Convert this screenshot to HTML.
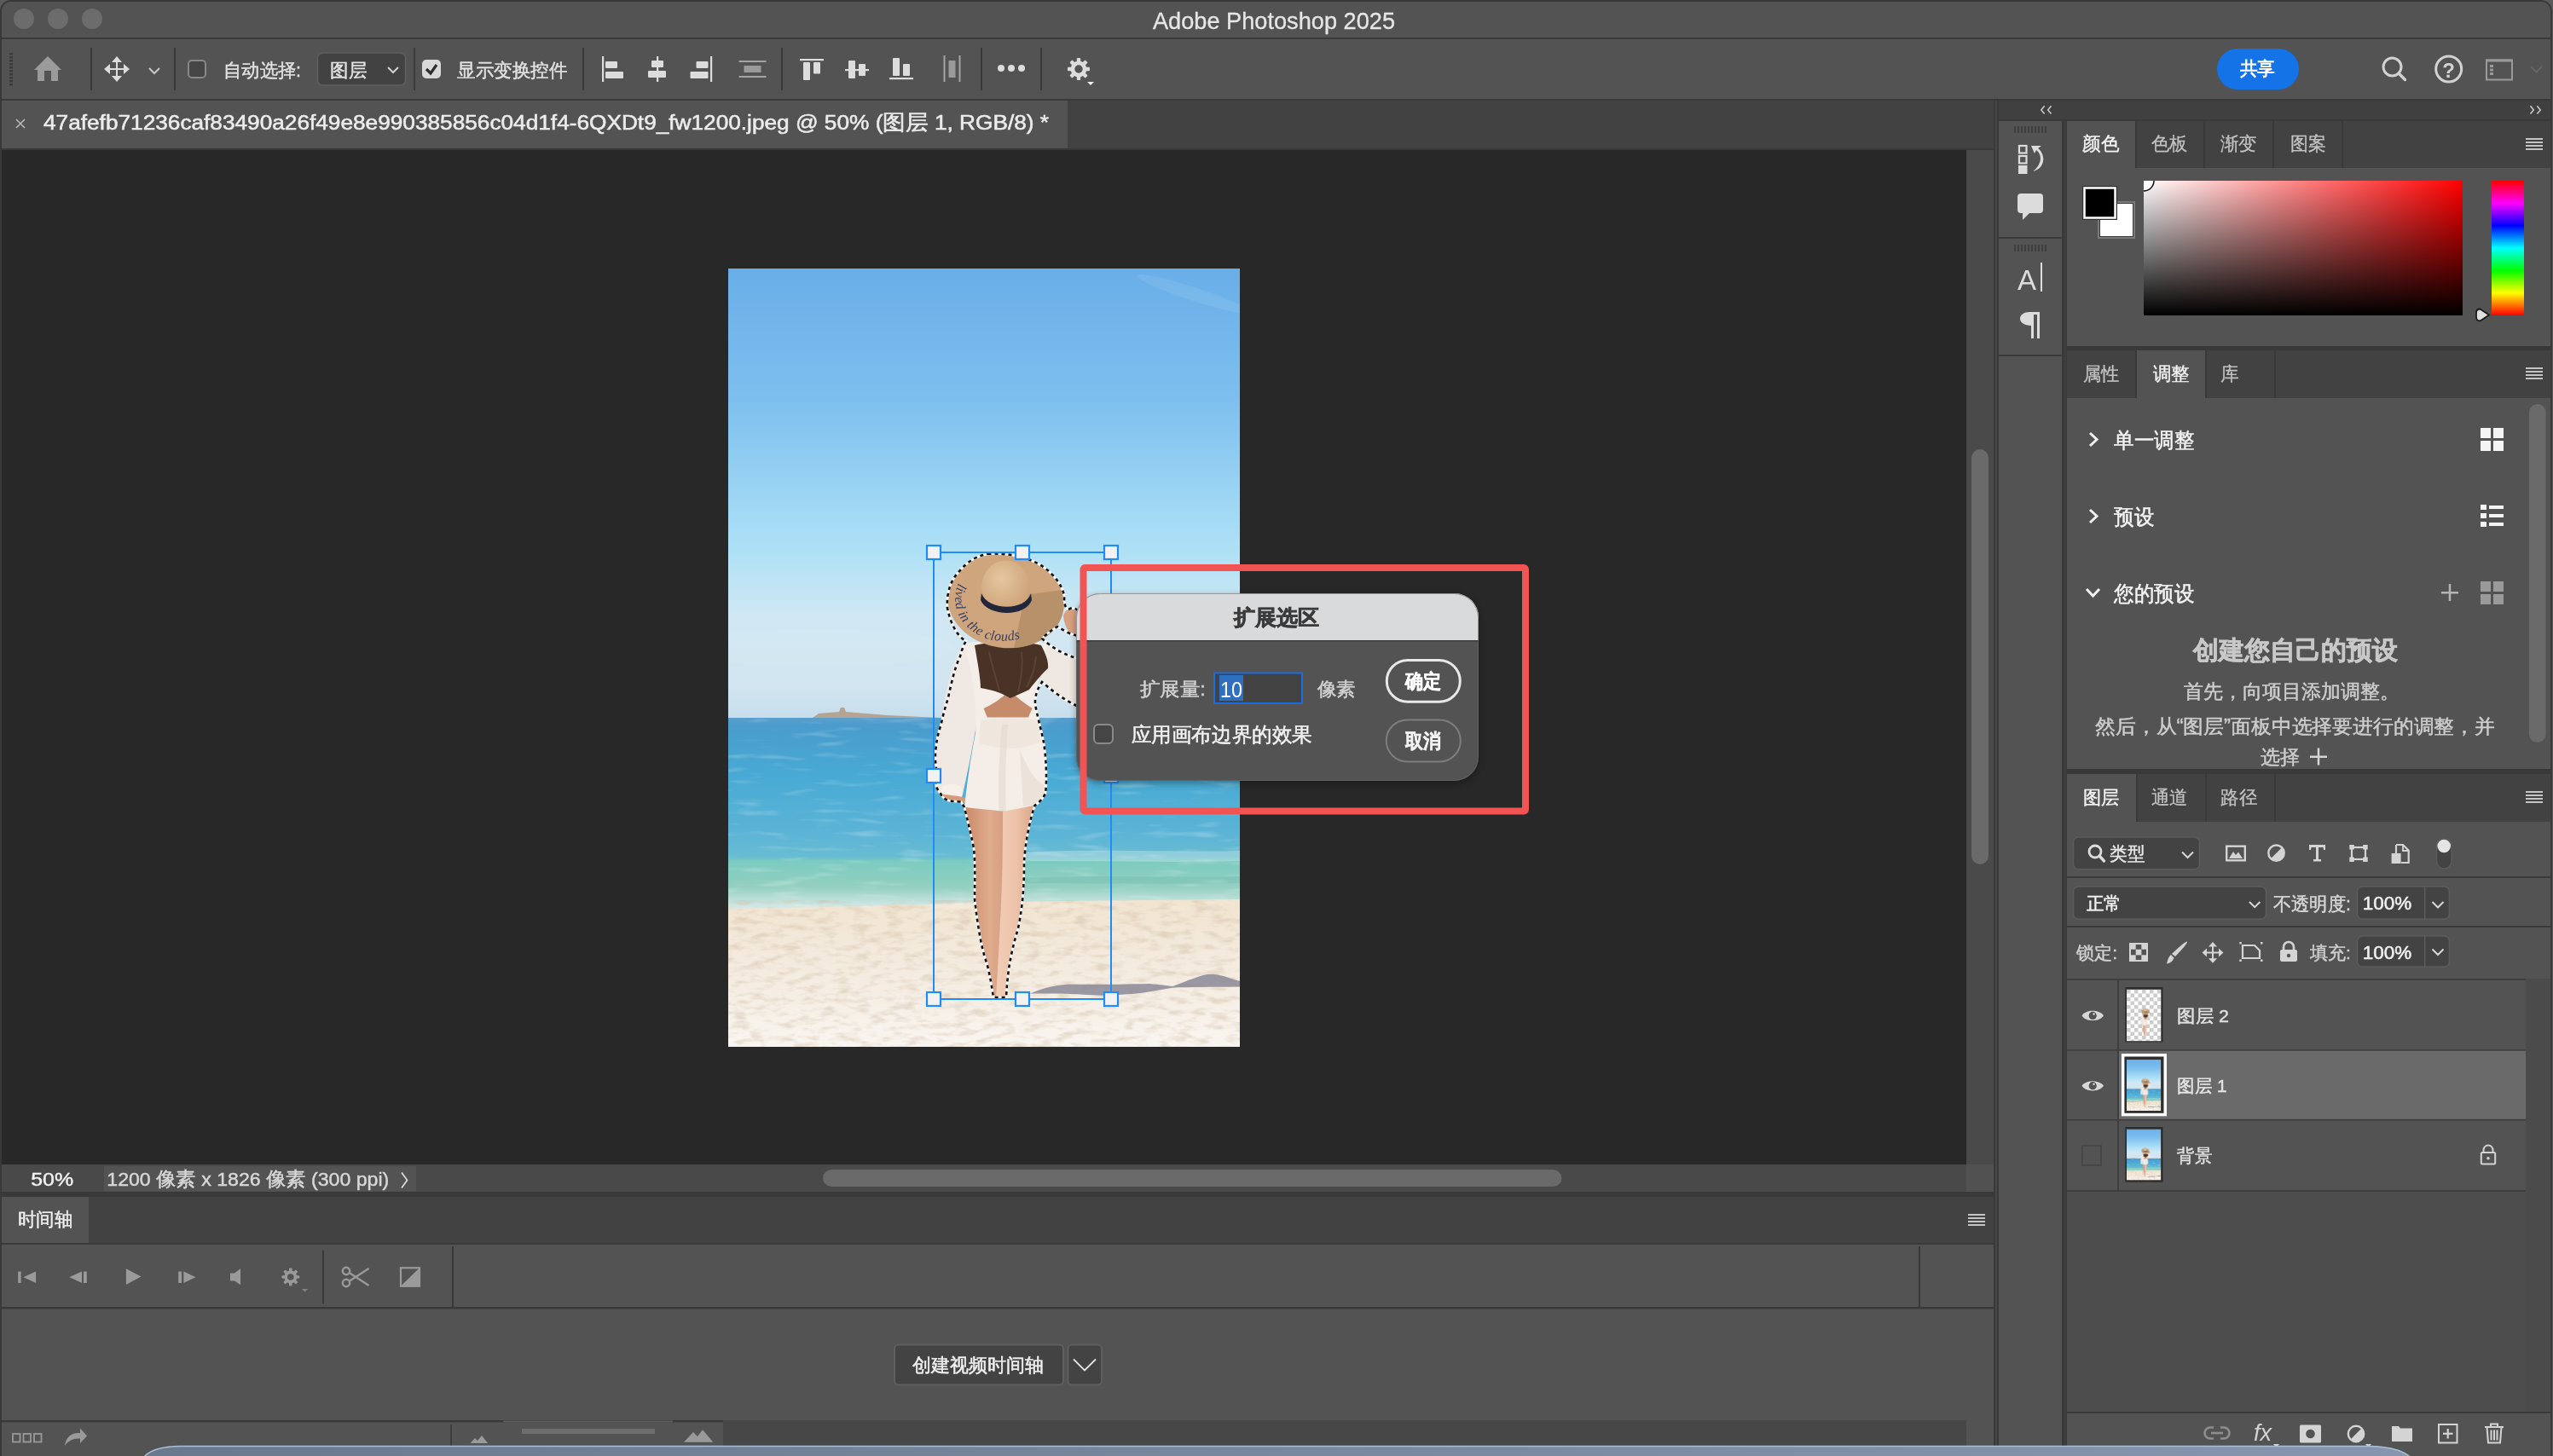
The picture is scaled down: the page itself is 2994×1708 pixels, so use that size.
<!DOCTYPE html>
<html><head><meta charset="utf-8">
<style>
*{box-sizing:border-box;margin:0;padding:0}
html,body{width:2994px;height:1708px;overflow:hidden;background:#5a5a5a;font-family:"Liberation Sans",sans-serif;color:#e8e8e8}
.a{position:absolute}
.t{position:absolute;white-space:nowrap;line-height:1}
.ic{position:absolute;background:#dcdcdc}
</style></head><body>
<!-- window frame -->
<div class="a" style="left:0;top:0;width:2993px;height:1708px;background:#393939;border-radius:13px 13px 0 0"></div>
<!-- title bar -->
<div class="a" style="left:2px;top:2px;width:2989px;height:42px;background:#535353;border-radius:11px 11px 0 0"></div>
<div class="a" style="left:16px;top:10px;width:24px;height:24px;border-radius:50%;background:#6c6c6c"></div>
<div class="a" style="left:56px;top:10px;width:24px;height:24px;border-radius:50%;background:#6c6c6c"></div>
<div class="a" style="left:96px;top:10px;width:24px;height:24px;border-radius:50%;background:#6c6c6c"></div>

<!-- options bar -->
<div class="a" style="left:2px;top:46px;width:2989px;height:70px;background:#535353"></div>

<!-- doc tab bar -->
<div class="a" style="left:2px;top:118px;width:2336px;height:56px;background:#424242"></div>
<div class="a" style="left:2px;top:118px;width:1250px;height:56px;background:#535353"></div>

<!-- canvas -->
<div class="a" style="left:2px;top:176px;width:2304px;height:1190px;background:#282828"></div>
<div class="a" style="left:2306px;top:176px;width:32px;height:1190px;background:#4a4a4a"></div>
<div class="a" style="left:2312px;top:527px;width:20px;height:487px;background:#6a6a6a;border-radius:10px"></div>

<svg class="a" style="left:854px;top:315px" width="600" height="913" viewBox="854 315 600 913">
<defs>
<linearGradient id="sky" x1="0" y1="0" x2="0" y2="1"><stop offset="0" stop-color="#69aee8"/><stop offset="0.29" stop-color="#7dbfee"/><stop offset="0.615" stop-color="#ace0f6"/><stop offset="0.77" stop-color="#d0e8f4"/><stop offset="0.92" stop-color="#d2e5f0"/><stop offset="1" stop-color="#c8deec"/></linearGradient>
<linearGradient id="sea" x1="0" y1="0" x2="0" y2="1"><stop offset="0" stop-color="#5a9fcc"/><stop offset="0.04" stop-color="#4a9ccc"/><stop offset="0.3" stop-color="#48aad4"/><stop offset="0.6" stop-color="#5cb4d6"/><stop offset="0.72" stop-color="#68bcd2"/><stop offset="0.745" stop-color="#7ccbc0"/><stop offset="0.88" stop-color="#94d0c0"/><stop offset="0.93" stop-color="#b4dcd4"/><stop offset="0.97" stop-color="#cce6e4"/><stop offset="1" stop-color="#dde9e0"/></linearGradient>
<linearGradient id="sand" x1="0" y1="0" x2="0" y2="1"><stop offset="0" stop-color="#f1e4d0"/><stop offset="0.3" stop-color="#f3e9db"/><stop offset="0.7" stop-color="#f6efe6"/><stop offset="1" stop-color="#f9f5f0"/></linearGradient>
<radialGradient id="crown" cx="0.4" cy="0.35" r="0.75"><stop offset="0" stop-color="#e6c6a0"/><stop offset="1" stop-color="#c99e72"/></radialGradient>
<linearGradient id="legL" x1="0" y1="0" x2="1" y2="0"><stop offset="0" stop-color="#c88a68"/><stop offset="0.6" stop-color="#e0ac8e"/><stop offset="1" stop-color="#d49c7e"/></linearGradient>
<linearGradient id="legR" x1="0" y1="0" x2="1" y2="0"><stop offset="0" stop-color="#f0cdb6"/><stop offset="0.5" stop-color="#eec4aa"/><stop offset="1" stop-color="#d9a486"/></linearGradient>
<path id="brimtxt" d="M1128 676 C1118 700 1130 728 1160 738 C1180 744 1205 742 1222 730"/>
</defs>
<g id="photoimg"><g id="bgimg">
<rect x="854" y="315" width="600" height="528" fill="url(#sky)"/>
<ellipse cx="1400" cy="345" rx="70" ry="8" fill="#ffffff" opacity="0.08" transform="rotate(18 1400 345)"/>
<ellipse cx="960" cy="760" rx="160" ry="22" fill="#ffffff" opacity="0.05"/>
<rect x="854" y="842" width="600" height="226" fill="url(#sea)"/>
<path d="M1200 1000 C1280 995 1380 1000 1454 998 L1454 1010 C1380 1012 1280 1010 1200 1010 Z" fill="#e0f0ee" opacity="0.35"/>
<path d="M1200 1030 C1290 1026 1380 1030 1454 1028 L1454 1036 C1380 1038 1290 1036 1200 1036 Z" fill="#5aa8a0" opacity="0.2"/>
<path d="M854 1066 C1000 1064 1100 1060 1200 1058 C1300 1056 1380 1056 1454 1055 L1454 1228 L854 1228 Z" fill="url(#sand)"/>
<filter id="sandn" x="854" y="1056" width="600" height="172" filterUnits="userSpaceOnUse"><feTurbulence type="fractalNoise" baseFrequency="0.05 0.13" numOctaves="3" seed="11" result="n"/><feColorMatrix in="n" type="matrix" values="0 0 0 0 0.62  0 0 0 0 0.5  0 0 0 0 0.36  -3 0 0 0 1.62"/></filter>
<rect x="854" y="1062" width="600" height="166" fill="#000" filter="url(#sandn)" opacity="0.42"/>
<filter id="sean" x="854" y="842" width="600" height="226" filterUnits="userSpaceOnUse"><feTurbulence type="fractalNoise" baseFrequency="0.02 0.12" numOctaves="2" seed="5" result="n"/><feColorMatrix in="n" type="matrix" values="0 0 0 0 1  0 0 0 0 1  0 0 0 0 1  2.2 0 0 0 -1.25"/></filter>
<rect x="854" y="846" width="600" height="205" fill="#000" filter="url(#sean)" opacity="0.35"/>
<path d="M953 842 L960 837 L984 835 L986 830 L990 830 L992 835 L1040 839 L1103 842 Z" fill="#b4a494"/>
<path d="M1208 1165.6 C1225 1158 1240 1155 1258.7 1154.5 C1280 1155 1300 1155 1348.6 1154 C1360 1155 1368 1156 1375 1157 C1395 1150 1410 1142 1422.7 1142.8 C1435 1144 1445 1149 1454 1150.8 L1454 1157.6 C1420 1158 1395 1158 1375 1158.7 C1355 1162 1340 1165 1327.5 1166 C1310 1167 1300 1167.5 1295.7 1167.7 C1270 1167 1255 1166 1242.9 1165.6 Z" fill="#8a8898" opacity="0.85"/>
</g>
<!-- figure -->
<defs><clipPath id="brimclip"><ellipse cx="1179.5" cy="705" rx="68.5" ry="55" transform="rotate(8 1179.5 705)"/></clipPath>
<path id="brimtxt2" d="M1124 684 C1112 712 1128 740 1160 750 C1185 755 1208 748 1224 736"/>
<filter id="soft" x="-5%" y="-5%" width="110%" height="110%"><feGaussianBlur stdDeviation="0.7"/></filter></defs>
<g id="figimg">
<g filter="url(#soft)">
<path d="M1216 752 C1232 758 1250 768 1274 772 L1274 832 C1255 826 1235 812 1222 800 C1216 790 1214 770 1216 752 Z" fill="#efe7e1"/>
<path d="M1247 722 C1250 713 1258 712 1264 718 L1266 748 C1256 747 1248 737 1247 722 Z" fill="#d8a080"/>
<path d="M1130 755 C1120 770 1110 800 1103 851 C1098 875 1096 895 1098 910 C1097 920 1100 928 1104 932 L1128 936 C1134 910 1140 880 1146 845 C1148 810 1142 775 1130 755 Z" fill="#f0e8e2"/>
<path d="M1104 926 C1106 918 1122 918 1128 924 L1128 936 C1118 936 1108 934 1104 932 Z" fill="#f6f0ea"/>
<path d="M1104 932 C1110 940 1120 942 1132 941 L1134 936 C1124 934 1112 932 1104 932 Z" fill="#d49a7a"/>
<path d="M1130 755 C1160 750 1205 750 1228 756 C1222 780 1214 805 1214.7 830 C1218 846 1222 860 1224 871 C1227 890 1228 915 1226 931 C1222 938 1218 942 1213.7 944.7 C1200 950 1185 954 1172.5 954 C1158 953 1143 950 1131 947 C1134 920 1138 890 1144 860 C1146 835 1142 790 1130 755 Z" fill="#f5ede7"/>
<path d="M1150 845 C1170 842 1195 842 1216 845 L1220 870 C1200 880 1175 880 1148 872 Z" fill="#ece2da" opacity="0.7"/>
<path d="M1175 850 C1172 880 1170 920 1172 954 L1180 953 C1178 920 1180 880 1182 850 Z" fill="#e4d8cf" opacity="0.6"/>
<path d="M1196 880 C1205 900 1212 915 1224 920 L1226 931 C1222 938 1218 942 1213.7 944.7 L1200 946 Z" fill="#e9ddd4" opacity="0.7"/>
<path d="M1153.6 831 C1165 826 1176 818 1184 810 C1192 818 1203 826 1210.7 831 C1208 836 1207 839 1206 841.6 L1158 841.6 C1156 838 1155 834 1153.6 831 Z" fill="#c68b6a"/>
<path d="M1143 757 C1165 752 1200 752 1221 757 C1226 766 1230 776 1229 784 C1222 790 1214 800 1207 809 C1200 812 1192 816 1185 819 C1176 814 1168 810 1150 807 C1150 795 1146 775 1143 757 Z" fill="#4a3127"/><path d="M1160 765 C1163 780 1168 795 1172 810 M1198 765 C1200 780 1198 795 1194 812 M1215 770 C1214 782 1210 795 1204 806" stroke="#6e5040" stroke-width="2" fill="none" opacity="0.55"/>
<path d="M1131 947 C1134 960 1138 975 1142 995 C1144 1015 1143 1035 1143 1055 C1146 1080 1150 1110 1157 1129 C1160 1140 1162 1150 1165 1170 L1176 1170 C1175 1140 1178 1100 1176 1060 C1175 1020 1178 980 1180 952 Z" fill="url(#legL)"/>
<path d="M1176 952 L1213.7 944.7 C1208 960 1202 990 1201 1012 C1201 1035 1200 1060 1194 1089 C1188 1110 1182 1130 1180 1170 L1168 1170 C1170 1140 1172 1100 1174 1060 C1176 1020 1176 980 1176 952 Z" fill="url(#legR)"/>
<ellipse cx="1179.5" cy="705" rx="68.5" ry="55" transform="rotate(8 1179.5 705)" fill="#cea57c"/>
<path d="M1202 698 L1262 690 L1262 775 L1186 775 Z" fill="#a8845f" opacity="0.6" clip-path="url(#brimclip)"/>
<ellipse cx="1179.6" cy="688" rx="28.3" ry="30.5" fill="url(#crown)"/>
<path d="M1151 696 C1158 716 1202 718 1209 696 L1210 704 C1202 725 1158 723 1150 704 Z" fill="#24273a"/>
</g>
<text font-family="Liberation Serif, serif" font-style="italic" font-size="16" fill="#3a4062" letter-spacing="0.3"><textPath href="#brimtxt2">lived in the clouds</textPath></text>
</g></g>
<!-- marching ants -->
<path d="M1158.5 649.8 C1185 648 1215 655 1232 672 C1244 684 1249 695 1248 705 C1249 712 1251 716 1255 714 C1259 712 1262 714 1266 718 L1268 746 C1258 746 1248 740 1240 735 C1232 740 1226 745 1222 749 C1232 758 1246 769 1274 775 L1274 832 C1258 828 1238 814 1222 800 C1214 812 1213 822 1214.7 830 C1218 846 1222 860 1224 871 C1227 890 1228 915 1226 931 C1222 938 1218 942 1213.7 944.7 C1208 960 1202 990 1201 1012 C1201 1035 1200 1060 1194 1089 C1188 1110 1182 1130 1180 1170 L1165 1170 C1162 1150 1160 1140 1157 1129 C1150 1110 1146 1080 1143 1055 C1143 1035 1144 1015 1142 995 C1138 975 1134 960 1131 947 C1128 942 1127 941 1127 940.6 C1120 940 1114 940 1110.6 938.5 C1106 936 1104 934 1103.4 931.3 C1099 926 1097.7 922 1097.7 921 C1097 912 1098 906 1098.2 902.4 C1097 895 1096.5 888 1097.2 881.8 C1098 870 1100 860 1103.4 851 C1106 838 1109 828 1111.6 820 C1116 800 1120 782 1126 770 C1128 762 1130 757 1132.8 752 C1125 748 1115 735 1110.9 712.5 C1110 695 1115 680 1125.2 670 C1135 658 1146 652 1158.5 649.8 Z" fill="none" stroke="#ffffff" stroke-width="2.6"/>
<path d="M1158.5 649.8 C1185 648 1215 655 1232 672 C1244 684 1249 695 1248 705 C1249 712 1251 716 1255 714 C1259 712 1262 714 1266 718 L1268 746 C1258 746 1248 740 1240 735 C1232 740 1226 745 1222 749 C1232 758 1246 769 1274 775 L1274 832 C1258 828 1238 814 1222 800 C1214 812 1213 822 1214.7 830 C1218 846 1222 860 1224 871 C1227 890 1228 915 1226 931 C1222 938 1218 942 1213.7 944.7 C1208 960 1202 990 1201 1012 C1201 1035 1200 1060 1194 1089 C1188 1110 1182 1130 1180 1170 L1165 1170 C1162 1150 1160 1140 1157 1129 C1150 1110 1146 1080 1143 1055 C1143 1035 1144 1015 1142 995 C1138 975 1134 960 1131 947 C1128 942 1127 941 1127 940.6 C1120 940 1114 940 1110.6 938.5 C1106 936 1104 934 1103.4 931.3 C1099 926 1097.7 922 1097.7 921 C1097 912 1098 906 1098.2 902.4 C1097 895 1096.5 888 1097.2 881.8 C1098 870 1100 860 1103.4 851 C1106 838 1109 828 1111.6 820 C1116 800 1120 782 1126 770 C1128 762 1130 757 1132.8 752 C1125 748 1115 735 1110.9 712.5 C1110 695 1115 680 1125.2 670 C1135 658 1146 652 1158.5 649.8 Z" fill="none" stroke="#111111" stroke-width="2.6" stroke-dasharray="4 4"/>
</svg>
<!-- transform box -->
<svg class="a" style="left:0;top:0" width="2994" height="1708" viewBox="0 0 2994 1708">
<rect x="1095" y="648" width="208" height="524" fill="none" stroke="#1e8df5" stroke-width="2"/>
<g fill="#f2f2f2" stroke="#1e8df5" stroke-width="2.2">
<rect x="1087" y="640" width="16" height="16"/><rect x="1191" y="640" width="16" height="16"/><rect x="1295" y="640" width="16" height="16"/>
<rect x="1087" y="902" width="16" height="16"/><rect x="1295" y="902" width="16" height="16"/>
<rect x="1087" y="1164" width="16" height="16"/><rect x="1191" y="1164" width="16" height="16"/><rect x="1295" y="1164" width="16" height="16"/>
</g>
</svg>


<!-- dialog -->
<svg class="a" style="left:0;top:0" width="2994" height="1708" viewBox="0 0 2994 1708">
<defs><filter id="dsh" x="-10%" y="-10%" width="120%" height="130%"><feGaussianBlur stdDeviation="4"/></filter>
<clipPath id="dclip"><rect x="1262" y="696" width="472" height="220" rx="28"/></clipPath></defs>
<rect x="1262" y="699" width="472" height="220" rx="28" fill="#000" opacity="0.35" filter="url(#dsh)"/>
<g clip-path="url(#dclip)">
<rect x="1262" y="696" width="472" height="220" fill="#535353"/>
<rect x="1262" y="696" width="472" height="56" fill="#d9dadc"/>
<rect x="1262" y="751" width="472" height="1.5" fill="#3c3c3c"/>
</g>
<rect x="1262.5" y="696.5" width="471" height="219" rx="28" fill="none" stroke="#6a6a6a" stroke-width="1" opacity="0.6"/>
<text x="1446.7" y="733" font-size="25" font-weight="bold" fill="#3b3b3b" stroke="#3b3b3b" stroke-width="0.7" textLength="100" lengthAdjust="spacingAndGlyphs">扩展选区</text>
<text x="1336.8" y="816" font-size="22" fill="#d2d2d2" stroke="#d2d2d2" stroke-width="0.5" textLength="77" lengthAdjust="spacingAndGlyphs">扩展量:</text>
<rect x="1424" y="789.5" width="103" height="35.5" fill="#434343" stroke="#1a6de0" stroke-width="2"/>
<rect x="1430" y="792" width="28" height="30" fill="#2e6fc2"/>
<text x="1431" y="818" font-size="25" fill="#ffffff" textLength="26" lengthAdjust="spacingAndGlyphs">10</text>
<text x="1544.6" y="816" font-size="22" fill="#d2d2d2" stroke="#d2d2d2" stroke-width="0.5" textLength="45" lengthAdjust="spacingAndGlyphs">像素</text>
<rect x="1626.3" y="774.5" width="86" height="48.8" rx="24.4" fill="none" stroke="#e8e8e8" stroke-width="3"/>
<text x="1648" y="807" font-size="23" font-weight="bold" fill="#ffffff" stroke="#ffffff" stroke-width="0.5" textLength="42" lengthAdjust="spacingAndGlyphs">确定</text>
<rect x="1625.8" y="844.4" width="87" height="49" rx="24.5" fill="none" stroke="#7e7e7e" stroke-width="2"/>
<text x="1648" y="877" font-size="23" font-weight="bold" fill="#f2f2f2" stroke="#f2f2f2" stroke-width="0.5" textLength="42" lengthAdjust="spacingAndGlyphs">取消</text>
<rect x="1283" y="850" width="22" height="22" rx="5" fill="#454545" stroke="#8a8a8a" stroke-width="2"/>
<text x="1326.5" y="870" font-size="23.6" fill="#f2f2f2" stroke="#f2f2f2" stroke-width="0.5" textLength="212.5" lengthAdjust="spacingAndGlyphs">应用画布边界的效果</text>
<rect x="1270.5" y="666" width="518.5" height="285.6" rx="2" fill="none" stroke="#f25454" stroke-width="8"/>
</svg>

<!-- status bar -->
<div class="a" style="left:2px;top:1366px;width:2304px;height:32px;background:#4a4a4a"></div>
<div class="a" style="left:2306px;top:1366px;width:32px;height:32px;background:#515151"></div>

<!-- timeline -->
<div class="a" style="left:2px;top:1404px;width:2336px;height:54px;background:#424242"></div>
<div class="a" style="left:2px;top:1404px;width:102px;height:56px;background:#535353"></div>
<div class="a" style="left:2px;top:1460px;width:2336px;height:73px;background:#535353"></div>
<div class="a" style="left:2px;top:1535px;width:2336px;height:131px;background:#535353"></div>
<div class="a" style="left:2px;top:1668px;width:2304px;height:40px;background:#4a4a4a"></div>

<!-- right icon column -->
<div class="a" style="left:2340px;top:118px;width:2px;height:1590px;background:#474747"></div>
<div class="a" style="left:2421px;top:142px;width:1.5px;height:1566px;background:#3f3f3f"></div>
<div class="a" style="left:2344px;top:118px;width:647px;height:22px;background:#404040"></div>
<div class="a" style="left:2344px;top:142px;width:74px;height:1566px;background:#535353"></div>

<!-- right panels -->
<div class="a" style="left:2424px;top:142px;width:567px;height:264px;background:#535353"></div>
<div class="a" style="left:2424px;top:411px;width:567px;height:491px;background:#535353"></div>
<div class="a" style="left:2424px;top:908px;width:567px;height:748px;background:#535353"></div>
<div class="a" style="left:2424px;top:1658px;width:567px;height:50px;background:#535353"></div>


<svg class="a" style="left:0;top:0" width="2994" height="1708" viewBox="0 0 2994 1708" font-family="Liberation Sans, sans-serif">
<!-- ===== title ===== -->
<text x="1352" y="34" font-size="27.4" fill="#e6e6e6" stroke="#e6e6e6" stroke-width="0.3" textLength="284" lengthAdjust="spacingAndGlyphs">Adobe Photoshop 2025</text>
<!-- ===== options bar ===== -->
<g fill="#3c3c3c"><rect x="11" y="62" width="4" height="2.5"/><rect x="11" y="66" width="4" height="2.5"/><rect x="11" y="70" width="4" height="2.5"/><rect x="11" y="74" width="4" height="2.5"/><rect x="11" y="78" width="4" height="2.5"/><rect x="11" y="82" width="4" height="2.5"/><rect x="11" y="86" width="4" height="2.5"/><rect x="11" y="90" width="4" height="2.5"/><rect x="11" y="94" width="4" height="2.5"/><rect x="11" y="98" width="4" height="2.5"/></g>
<path d="M40 82 L56 66 L72 82 L68 82 L68 95 L60 95 L60 83 L52 83 L52 95 L44 95 L44 82 Z" fill="#9b9b9b"/>
<g fill="#3a3a3a"><rect x="106" y="56" width="2" height="50"/><rect x="204" y="56" width="2" height="50"/><rect x="485" y="56" width="2" height="50"/><rect x="683" y="56" width="2" height="50"/><rect x="916" y="56" width="2" height="50"/><rect x="1150" y="56" width="2" height="50"/><rect x="1220" y="56" width="2" height="50"/></g>
<!-- move icon -->
<g fill="#dcdcdc"><rect x="136" y="70" width="2" height="22"/><rect x="126" y="80" width="22" height="2"/>
<path d="M137 66 L143 73 L131 73 Z"/><path d="M137 96 L143 89 L131 89 Z"/><path d="M122 81 L129 75 L129 87 Z"/><path d="M152 81 L145 75 L145 87 Z"/></g>
<path d="M175 80 L181 86 L187 80" stroke="#c8c8c8" stroke-width="2" fill="none"/>
<!-- checkbox -->
<rect x="221" y="71" width="20" height="20" rx="4" fill="#454545" stroke="#888" stroke-width="2"/>
<text x="262" y="90" font-size="22" fill="#e2e2e2" stroke="#e2e2e2" stroke-width="0.45" textLength="91" lengthAdjust="spacingAndGlyphs">自动选择:</text>
<rect x="372.5" y="62" width="103" height="38" rx="6" fill="#424242" stroke="#606060" stroke-width="1.5"/>
<text x="387" y="90" font-size="22" fill="#e2e2e2" stroke="#e2e2e2" stroke-width="0.45" textLength="43" lengthAdjust="spacingAndGlyphs">图层</text>
<path d="M455 79 L461 85 L467 79" stroke="#d0d0d0" stroke-width="2" fill="none"/>
<rect x="495" y="70" width="22" height="22" rx="5" fill="#d8d8d8"/>
<path d="M500 81 L505 86 L512 76" stroke="#2e2e2e" stroke-width="3.2" fill="none"/>
<text x="536" y="90" font-size="22" fill="#e2e2e2" stroke="#e2e2e2" stroke-width="0.45" textLength="129" lengthAdjust="spacingAndGlyphs">显示变换控件</text>
<!-- align icons -->
<g fill="#dcdcdc">
<rect x="706" y="66" width="2.2" height="30"/><rect x="710" y="72" width="14" height="8" rx="1"/><rect x="710" y="84" width="21" height="8" rx="1"/>
<rect x="770" y="66" width="2.2" height="30"/><rect x="764" y="71" width="14" height="8" rx="1"/><rect x="760" y="83" width="21" height="8" rx="1"/>
<rect x="833" y="66" width="2.2" height="30"/><rect x="816.5" y="72" width="14" height="8" rx="1"/><rect x="809.5" y="84" width="21" height="8" rx="1"/>
</g>
<g fill="#a4a4a4"><rect x="866.5" y="71" width="32" height="2"/><rect x="866.5" y="89" width="32" height="2"/></g>
<rect x="872.5" y="77" width="20" height="8" fill="#9a9a9a"/>
<g fill="#dcdcdc">
<rect x="938" y="69" width="28" height="2.2"/><rect x="942" y="73" width="8" height="21" rx="1"/><rect x="954" y="73" width="8" height="13.5" rx="1"/>
<rect x="991" y="81" width="28" height="2.2"/><rect x="995" y="71" width="8" height="21" rx="1"/><rect x="1007" y="75" width="8" height="14" rx="1"/>
<rect x="1043" y="91" width="28" height="2.2"/><rect x="1047" y="68" width="8" height="21" rx="1"/><rect x="1059" y="75" width="8" height="14" rx="1"/>
</g>
<g fill="#a4a4a4"><rect x="1106.5" y="65" width="2" height="31"/><rect x="1124.5" y="65" width="2" height="31"/></g>
<rect x="1112.5" y="71" width="8" height="20" fill="#9a9a9a"/>
<g fill="#dcdcdc"><circle cx="1174" cy="80" r="4"/><circle cx="1186" cy="80" r="4"/><circle cx="1198" cy="80" r="4"/></g>
<!-- gear -->
<g transform="translate(1265 81) scale(1)" fill="#dcdcdc"><circle r="9.4"/><rect x="-2.2" y="-13" width="4.4" height="6" rx="1" transform="rotate(0)"/><rect x="-2.2" y="-13" width="4.4" height="6" rx="1" transform="rotate(45)"/><rect x="-2.2" y="-13" width="4.4" height="6" rx="1" transform="rotate(90)"/><rect x="-2.2" y="-13" width="4.4" height="6" rx="1" transform="rotate(135)"/><rect x="-2.2" y="-13" width="4.4" height="6" rx="1" transform="rotate(180)"/><rect x="-2.2" y="-13" width="4.4" height="6" rx="1" transform="rotate(225)"/><rect x="-2.2" y="-13" width="4.4" height="6" rx="1" transform="rotate(270)"/><rect x="-2.2" y="-13" width="4.4" height="6" rx="1" transform="rotate(315)"/><circle r="4.7" fill="#535353"/></g>
<path d="M1275 96 L1283 96 L1279 100 Z" fill="#f0f0f0"/>
<!-- share -->
<rect x="2600" y="57" width="96" height="48" rx="24" fill="#1473e6"/>
<text x="2626.5" y="88" font-size="22" font-weight="bold" fill="#ffffff" textLength="41.5" lengthAdjust="spacingAndGlyphs">共享</text>
<circle cx="2805.5" cy="78.5" r="10.5" fill="none" stroke="#d2d2d2" stroke-width="3"/>
<path d="M2813 86 L2820.5 93.5" stroke="#d2d2d2" stroke-width="3.4" stroke-linecap="round"/>
<circle cx="2871.7" cy="81" r="15" fill="none" stroke="#d2d2d2" stroke-width="3"/>
<text x="2871.7" y="90.5" font-size="24" font-weight="bold" fill="#d2d2d2" text-anchor="middle">?</text>
<rect x="2916" y="70.5" width="30" height="23" fill="none" stroke="#9a9a9a" stroke-width="2"/>
<rect x="2916" y="69.5" width="30" height="3" fill="#9a9a9a"/>
<g fill="#9a9a9a"><rect x="2920" y="76" width="4" height="3"/><rect x="2920" y="80.5" width="4" height="3"/><rect x="2920" y="85" width="4" height="3"/></g>
<path d="M2968 78 L2974.5 84.5 L2981 78" stroke="#666" stroke-width="2" fill="none"/>
<!-- ===== doc tab ===== -->
<path d="M19 140 L29 150 M29 140 L19 150" stroke="#b8b8b8" stroke-width="1.6"/>
<text x="51" y="152" font-size="24.6" fill="#ececec" stroke="#ececec" stroke-width="0.55" textLength="1179" lengthAdjust="spacingAndGlyphs">47afefb71236caf83490a26f49e8e990385856c04d1f4-6QXDt9_fw1200.jpeg @ 50% (图层 1, RGB/8) *</text>
</svg>

<!-- right panels svg -->
<svg class="a" style="left:0;top:0" width="2994" height="1708" viewBox="0 0 2994 1708">
<defs>
<linearGradient id="cfh" x1="0" y1="0" x2="1" y2="0"><stop offset="0" stop-color="#ffffff"/><stop offset="1" stop-color="#ff0000"/></linearGradient>
<linearGradient id="cfv" x1="0" y1="0" x2="0" y2="1"><stop offset="0" stop-color="#000" stop-opacity="0"/><stop offset="1" stop-color="#000" stop-opacity="1"/></linearGradient>
<linearGradient id="hue" x1="0" y1="0" x2="0" y2="1"><stop offset="0" stop-color="#ff0000"/><stop offset="0.167" stop-color="#ff00ff"/><stop offset="0.333" stop-color="#0000ff"/><stop offset="0.5" stop-color="#00ffff"/><stop offset="0.667" stop-color="#00ff00"/><stop offset="0.833" stop-color="#ffff00"/><stop offset="1" stop-color="#ff0000"/></linearGradient>
<linearGradient id="tsky" x1="0" y1="0" x2="0" y2="1"><stop offset="0" stop-color="#5aa6e8"/><stop offset="1" stop-color="#c8e2f2"/></linearGradient>
<pattern id="chk" x="2494" y="1161" width="9" height="9" patternUnits="userSpaceOnUse"><rect width="9" height="9" fill="#ffffff"/><rect width="4.5" height="4.5" fill="#cccccc"/><rect x="4.5" y="4.5" width="4.5" height="4.5" fill="#cccccc"/></pattern>
<clipPath id="tclip1"><rect x="2494" y="1160.8" width="40.3" height="60.4"/></clipPath><clipPath id="tclip2"><rect x="2494" y="1243" width="40.3" height="60"/></clipPath><clipPath id="tclip3"><rect x="2494" y="1324.5" width="40.3" height="60.1"/></clipPath>
</defs>
<!-- header row -->
<path d="M2397.6 124.3 L2393.8 129 L2397.6 133.6 M2405.5 124.3 L2401.7 129 L2405.5 133.6" stroke="#cccccc" stroke-width="1.5" fill="none"/>
<path d="M2967.5 124.3 L2971.3 129 L2967.5 133.6 M2975.4 124.3 L2979.2 129 L2975.4 133.6" stroke="#cccccc" stroke-width="1.5" fill="none"/>
<!-- icon column -->
<rect x="2344" y="278" width="74" height="2" fill="#3a3a3a"/>
<rect x="2344" y="416" width="74" height="2" fill="#3a3a3a"/>
<g fill="#3e3e3e"><rect x="2362" y="148" width="2" height="8"/><rect x="2366" y="148" width="2" height="8"/><rect x="2370" y="148" width="2" height="8"/><rect x="2374" y="148" width="2" height="8"/><rect x="2378" y="148" width="2" height="8"/><rect x="2382" y="148" width="2" height="8"/><rect x="2386" y="148" width="2" height="8"/><rect x="2390" y="148" width="2" height="8"/><rect x="2394" y="148" width="2" height="8"/><rect x="2398" y="148" width="2" height="8"/><rect x="2362" y="287" width="2" height="8"/><rect x="2366" y="287" width="2" height="8"/><rect x="2370" y="287" width="2" height="8"/><rect x="2374" y="287" width="2" height="8"/><rect x="2378" y="287" width="2" height="8"/><rect x="2382" y="287" width="2" height="8"/><rect x="2386" y="287" width="2" height="8"/><rect x="2390" y="287" width="2" height="8"/><rect x="2394" y="287" width="2" height="8"/><rect x="2398" y="287" width="2" height="8"/></g>
<g fill="none" stroke="#dcdcdc" stroke-width="2.2"><rect x="2368" y="171" width="8.5" height="8.5"/><rect x="2368" y="183" width="8.5" height="8.5"/></g>
<rect x="2367" y="194" width="10.5" height="10" fill="#dcdcdc"/>
<path d="M2384 201 C2394 194 2396 182 2388 176 L2386 180 L2382 171 L2394 171 L2390 174 C2400 182 2398 198 2384 201 Z" fill="#dcdcdc"/>
<path d="M2370 227 L2392 227 Q2396 227 2396 231 L2396 246 Q2396 250 2392 250 L2380 250 L2372 258 L2372 250 L2370 250 Q2366 250 2366 246 L2366 231 Q2366 227 2370 227 Z" fill="#dcdcdc"/>
<text x="2366" y="340" font-size="33" fill="#dcdcdc">A</text>
<rect x="2393" y="308" width="2" height="34" fill="#dcdcdc"/>
<path d="M2380 366 L2392 366 L2392 397 L2389 397 L2389 369 L2385 369 L2385 397 L2382 397 L2382 382 C2374 382 2369 378 2369 374 C2369 369 2374 366 2380 366 Z" fill="#dcdcdc"/>
<!-- color panel tabs -->
<rect x="2504" y="142" width="487" height="55" fill="#424242"/>
<g fill="#393939"><rect x="2504" y="142" width="2" height="55"/><rect x="2584" y="142" width="2" height="55"/><rect x="2665" y="142" width="2" height="55"/><rect x="2746" y="142" width="2" height="55"/></g>
<text x="2442" y="175.5" font-size="22" fill="#f2f2f2" stroke="#f2f2f2" stroke-width="0.4" textLength="43" lengthAdjust="spacingAndGlyphs">颜色</text>
<text x="2522.5" y="175.5" font-size="22" fill="#c2c2c2" stroke="#c2c2c2" stroke-width="0.3" textLength="42.5" lengthAdjust="spacingAndGlyphs">色板</text>
<text x="2603.7" y="175.5" font-size="22" fill="#c2c2c2" stroke="#c2c2c2" stroke-width="0.3" textLength="43" lengthAdjust="spacingAndGlyphs">渐变</text>
<text x="2686" y="175.5" font-size="22" fill="#c2c2c2" stroke="#c2c2c2" stroke-width="0.3" textLength="42" lengthAdjust="spacingAndGlyphs">图案</text>
<g fill="#c4c4c4"><rect x="2962" y="162" width="20" height="2"/><rect x="2962" y="166" width="20" height="2"/><rect x="2962" y="170" width="20" height="2"/><rect x="2962" y="174" width="20" height="2"/></g>
<rect x="2460" y="236" width="44" height="44" fill="#7a7a7a"/>
<rect x="2462.5" y="238.5" width="39" height="39" fill="#ffffff" stroke="#3a3a3a" stroke-width="1"/>
<rect x="2442" y="218" width="41" height="40" fill="#303030"/>
<rect x="2444.5" y="220.5" width="36" height="35" fill="#000000" stroke="#ffffff" stroke-width="2.5"/>
<rect x="2514" y="212" width="374" height="158" fill="url(#cfh)"/>
<rect x="2514" y="212" width="374" height="158" fill="url(#cfv)"/>
<path d="M2514 212 L2526 212 A12 12 0 0 1 2514 224 Z" fill="#ffffff"/>
<path d="M2526 212 A12 12 0 0 1 2514 224" stroke="#111" stroke-width="1.5" fill="none"/>
<rect x="2922" y="212" width="38" height="158" fill="url(#hue)"/>
<path d="M2908.5 362.5 L2919 369.5 L2908.5 376.5 Q2904 376.5 2904 372 L2904 367 Q2904 362.5 2908.5 362.5 Z" fill="#e0e0e0" stroke="#1c1c1c" stroke-width="1.8"/>
<!-- adjustments panel -->
<rect x="2424" y="411" width="567" height="56" fill="#424242"/>
<rect x="2505" y="411" width="81" height="57" fill="#535353"/>
<g fill="#393939"><rect x="2504" y="411" width="2" height="56"/><rect x="2586" y="411" width="2" height="56"/><rect x="2667" y="411" width="2" height="56"/></g>
<text x="2442.5" y="446" font-size="21.5" fill="#c2c2c2" stroke="#c2c2c2" stroke-width="0.3" textLength="42.5" lengthAdjust="spacingAndGlyphs">属性</text>
<text x="2524.6" y="446" font-size="21.5" fill="#f2f2f2" stroke="#f2f2f2" stroke-width="0.4" textLength="43" lengthAdjust="spacingAndGlyphs">调整</text>
<text x="2604" y="446" font-size="21.5" fill="#c2c2c2" stroke="#c2c2c2" stroke-width="0.3" textLength="21.7" lengthAdjust="spacingAndGlyphs">库</text>
<g fill="#c4c4c4"><rect x="2962" y="431" width="20" height="2"/><rect x="2962" y="435" width="20" height="2"/><rect x="2962" y="439" width="20" height="2"/><rect x="2962" y="443" width="20" height="2"/></g>
<rect x="2966" y="474" width="19.5" height="397" rx="9.75" fill="#6a6a6a"/>
<path d="M2451 508 L2459 515.5 L2451 523" stroke="#f0f0f0" stroke-width="3" fill="none"/>
<text x="2479" y="524.5" font-size="25" fill="#f4f4f4" stroke="#f4f4f4" stroke-width="0.5" textLength="94" lengthAdjust="spacingAndGlyphs">单一调整</text>
<g fill="#f4f4f4"><rect x="2909" y="502" width="12" height="12"/><rect x="2924" y="502" width="12" height="12"/><rect x="2909" y="517" width="12" height="12"/><rect x="2924" y="517" width="12" height="12"/></g>
<path d="M2451 598 L2459 605.5 L2451 613" stroke="#f0f0f0" stroke-width="3" fill="none"/>
<text x="2479" y="614.5" font-size="25" fill="#f4f4f4" stroke="#f4f4f4" stroke-width="0.5" textLength="47" lengthAdjust="spacingAndGlyphs">预设</text>
<g fill="#f4f4f4"><rect x="2909" y="592" width="7" height="6"/><rect x="2919" y="593" width="17" height="4"/><rect x="2909" y="602" width="7" height="6"/><rect x="2919" y="603" width="17" height="4"/><rect x="2909" y="612" width="7" height="6"/><rect x="2919" y="613" width="17" height="4"/></g>
<path d="M2447 691 L2454.5 699 L2462 691" stroke="#f0f0f0" stroke-width="3" fill="none"/>
<text x="2479" y="705" font-size="25" fill="#f4f4f4" stroke="#f4f4f4" stroke-width="0.5" textLength="94" lengthAdjust="spacingAndGlyphs">您的预设</text>
<g fill="#b4b4b4"><rect x="2863" y="694" width="20" height="2.5"/><rect x="2871.75" y="685" width="2.5" height="20"/></g>
<g fill="#9a9a9a"><rect x="2909" y="682" width="12" height="12"/><rect x="2924" y="682" width="12" height="12"/><rect x="2909" y="697" width="12" height="12"/><rect x="2924" y="697" width="12" height="12"/></g>
<text x="2572" y="772.5" font-size="30" font-weight="bold" fill="#c8c8c8" stroke="#c8c8c8" stroke-width="0.6" textLength="240" lengthAdjust="spacingAndGlyphs">创建您自己的预设</text>
<text x="2561" y="819" font-size="23" fill="#cdcdcd" stroke="#cdcdcd" stroke-width="0.45" textLength="253" lengthAdjust="spacingAndGlyphs">首先，向项目添加调整。</text>
<text x="2457" y="860" font-size="23" fill="#cdcdcd" stroke="#cdcdcd" stroke-width="0.45" textLength="469" lengthAdjust="spacingAndGlyphs">然后，从“图层”面板中选择要进行的调整，并</text>
<text x="2651" y="896" font-size="23" fill="#cdcdcd" stroke="#cdcdcd" stroke-width="0.45" textLength="46" lengthAdjust="spacingAndGlyphs">选择</text>
<g fill="#d4d4d4"><rect x="2709" y="886.5" width="20" height="2.5"/><rect x="2717.75" y="877.5" width="2.5" height="20"/></g>
<!-- layers panel -->
<rect x="2424" y="908" width="567" height="56" fill="#424242"/>
<rect x="2424" y="908" width="81" height="57" fill="#535353"/>
<g fill="#393939"><rect x="2505" y="908" width="2" height="56"/><rect x="2586" y="908" width="2" height="56"/><rect x="2667" y="908" width="2" height="56"/></g>
<text x="2442.5" y="942.5" font-size="21.5" fill="#f2f2f2" stroke="#f2f2f2" stroke-width="0.4" textLength="42.5" lengthAdjust="spacingAndGlyphs">图层</text>
<text x="2523" y="942.5" font-size="21.5" fill="#c2c2c2" stroke="#c2c2c2" stroke-width="0.3" textLength="42.7" lengthAdjust="spacingAndGlyphs">通道</text>
<text x="2604" y="942.5" font-size="21.5" fill="#c2c2c2" stroke="#c2c2c2" stroke-width="0.3" textLength="43" lengthAdjust="spacingAndGlyphs">路径</text>
<g fill="#c4c4c4"><rect x="2962" y="928" width="20" height="2"/><rect x="2962" y="932" width="20" height="2"/><rect x="2962" y="936" width="20" height="2"/><rect x="2962" y="940" width="20" height="2"/></g>
<rect x="2431.5" y="982" width="148" height="37.7" rx="6" fill="#434343" stroke="#5c5c5c" stroke-width="1.5"/>
<circle cx="2457" cy="999" r="7" fill="none" stroke="#dcdcdc" stroke-width="2.8"/>
<path d="M2462 1004 L2467.5 1010" stroke="#dcdcdc" stroke-width="3.4" stroke-linecap="round"/>
<text x="2474" y="1008.6" font-size="21.5" fill="#e8e8e8" stroke="#e8e8e8" stroke-width="0.4" textLength="41.3" lengthAdjust="spacingAndGlyphs">类型</text>
<path d="M2559 999.5 L2565.5 1006 L2572 999.5" stroke="#d8d8d8" stroke-width="2" fill="none"/>
<rect x="2611.2" y="992.7" width="21.6" height="16.6" fill="none" stroke="#d4d4d4" stroke-width="2.4"/>
<path d="M2614 1007 L2619 999 L2622 1003 L2625 999.5 L2630 1007 Z" fill="#d4d4d4"/>
<circle cx="2669.5" cy="1000.7" r="9.2" fill="none" stroke="#d4d4d4" stroke-width="2.4"/>
<path d="M2676 994.2 A9.2 9.2 0 0 1 2663 1007.2 Z" fill="#d4d4d4"/>
<path d="M2708 991 L2727 991 L2727 997 L2725 997 L2724.5 994 L2719 994 L2719 1008 L2722 1008 L2722 1010.5 L2713 1010.5 L2713 1008 L2716 1008 L2716 994 L2710.5 994 L2710 997 L2708 997 Z" fill="#d4d4d4"/>
<rect x="2758" y="994" width="16" height="14" fill="none" stroke="#d4d4d4" stroke-width="2.2"/>
<g fill="#d4d4d4"><rect x="2755.3" y="991" width="5.5" height="5.5"/><rect x="2771.2" y="991" width="5.5" height="5.5"/><rect x="2755.3" y="1005.5" width="5.5" height="5.5"/><rect x="2771.2" y="1005.5" width="5.5" height="5.5"/></g>
<path d="M2810 991 L2818 991 L2824.7 997.7 L2824.7 1012 L2816 1012" stroke="#d4d4d4" stroke-width="2.2" fill="none"/>
<path d="M2818 991 L2818 998 L2824.7 998" stroke="#d4d4d4" stroke-width="1.8" fill="none"/>
<rect x="2804.6" y="1001" width="11" height="12" fill="#d4d4d4"/>
<path d="M2810 991 L2810 1001" stroke="#d4d4d4" stroke-width="2.2"/>
<rect x="2857.5" y="983.5" width="17.5" height="35.5" rx="8.75" fill="#434343" stroke="#5c5c5c" stroke-width="1.5"/>
<circle cx="2866.2" cy="992.5" r="7.8" fill="#e4e4e4"/>
<rect x="2424" y="1028" width="567" height="2" fill="#3a3a3a"/>
<rect x="2431.5" y="1040" width="226" height="38" rx="6" fill="#434343" stroke="#5c5c5c" stroke-width="1.5"/>
<text x="2446.8" y="1066.7" font-size="21" fill="#f0f0f0" stroke="#f0f0f0" stroke-width="0.5" textLength="41" lengthAdjust="spacingAndGlyphs">正常</text>
<path d="M2638 1058 L2644.2 1064.2 L2650.4 1058" stroke="#d8d8d8" stroke-width="2" fill="none"/>
<text x="2665.9" y="1067.6" font-size="22" fill="#d8d8d8" stroke="#d8d8d8" stroke-width="0.45" textLength="91" lengthAdjust="spacingAndGlyphs">不透明度:</text>
<rect x="2764.5" y="1040" width="108" height="38" rx="6" fill="#434343" stroke="#5c5c5c" stroke-width="1.5"/>
<rect x="2843" y="1040" width="1.5" height="38" fill="#5c5c5c"/>
<text x="2770.8" y="1066.7" font-size="21.3" fill="#f0f0f0" stroke="#f0f0f0" stroke-width="0.5" textLength="57.5" lengthAdjust="spacingAndGlyphs">100%</text>
<path d="M2852.5 1058 L2859 1064.5 L2865.5 1058" stroke="#d8d8d8" stroke-width="2" fill="none"/>
<rect x="2424" y="1086" width="567" height="2" fill="#3a3a3a"/>
<text x="2435" y="1125" font-size="21" fill="#d0d0d0" stroke="#d0d0d0" stroke-width="0.45" textLength="48" lengthAdjust="spacingAndGlyphs">锁定:</text>
<rect x="2498" y="1107" width="20" height="20" fill="none" stroke="#d4d4d4" stroke-width="2"/>
<g fill="#d4d4d4"><rect x="2498" y="1107" width="6.7" height="6.7"/><rect x="2511.3" y="1107" width="6.7" height="6.7"/><rect x="2504.7" y="1113.7" width="6.7" height="6.7"/><rect x="2498" y="1120.3" width="6.7" height="6.7"/><rect x="2511.3" y="1120.3" width="6.7" height="6.7"/></g>
<path d="M2565 1104.5 C2566 1106 2556 1117 2551 1122 L2547 1119 C2552 1114 2563 1104 2565 1104.5 Z M2549.5 1123.5 C2548 1128 2545 1130 2541 1130.5 C2542 1127 2543 1122 2546 1120 Z" fill="#d4d4d4"/>
<g fill="#d4d4d4"><rect x="2594" y="1108" width="2" height="19"/><rect x="2585.5" y="1116.5" width="19" height="2"/>
<path d="M2595 1105 L2600 1110.5 L2590 1110.5 Z"/><path d="M2595 1129.7 L2600 1124.2 L2590 1124.2 Z"/><path d="M2582.5 1117.5 L2588 1112.5 L2588 1122.5 Z"/><path d="M2607.5 1117.5 L2602 1112.5 L2602 1122.5 Z"/></g>
<path d="M2630 1109 L2644 1109 L2650 1115 L2650 1124 L2630 1124 Z" fill="none" stroke="#d4d4d4" stroke-width="2.2"/>
<g fill="#d4d4d4"><rect x="2626.3" y="1105" width="2.5" height="2.5"/><rect x="2651" y="1105" width="2.5" height="2.5"/><rect x="2626.3" y="1125.5" width="2.5" height="2.5"/><rect x="2651" y="1125.5" width="2.5" height="2.5"/></g>
<path d="M2678 1115 L2678 1111 A6 6 0 0 1 2690 1111 L2690 1115" stroke="#d4d4d4" stroke-width="2.6" fill="none"/>
<rect x="2674" y="1114" width="20" height="14" rx="2" fill="#d4d4d4"/>
<circle cx="2684" cy="1121" r="2.2" fill="#535353"/>
<text x="2708.8" y="1125" font-size="21" fill="#d0d0d0" stroke="#d0d0d0" stroke-width="0.45" textLength="48" lengthAdjust="spacingAndGlyphs">填充:</text>
<rect x="2764.5" y="1098" width="108" height="36" rx="6" fill="#434343" stroke="#5c5c5c" stroke-width="1.5"/>
<rect x="2843" y="1098" width="1.5" height="36" fill="#5c5c5c"/>
<text x="2770.8" y="1124.8" font-size="21.3" fill="#f0f0f0" stroke="#f0f0f0" stroke-width="0.5" textLength="57.5" lengthAdjust="spacingAndGlyphs">100%</text>
<path d="M2852.5 1113.5 L2859 1120 L2865.5 1113.5" stroke="#d8d8d8" stroke-width="2" fill="none"/>
<!-- layer rows -->
<rect x="2424" y="1148" width="538" height="250" fill="#535353"/>
<rect x="2962" y="1148" width="29" height="508" fill="#4b4b4b"/>
<rect x="2424" y="1398" width="538" height="258" fill="#4d4d4d"/>
<rect x="2484" y="1232.6" width="478" height="80" fill="#6a6a6a"/>
<g fill="#3e3e3e"><rect x="2424" y="1148" width="538" height="2"/><rect x="2424" y="1231" width="538" height="1.6"/><rect x="2424" y="1313" width="538" height="1.6"/><rect x="2424" y="1396" width="538" height="2"/><rect x="2483" y="1150" width="2" height="246"/></g>
<g fill="#d8d8d8"><path d="M2441.5 1191.4 C2446 1184 2462 1184 2467 1191.4 C2462 1199 2446 1199 2441.5 1191.4 Z"/><path d="M2441.5 1273.7 C2446 1266.3 2462 1266.3 2467 1273.7 C2462 1281.3 2446 1281.3 2441.5 1273.7 Z"/></g>
<g fill="#535353"><circle cx="2454.2" cy="1191.4" r="4.6"/><circle cx="2454.2" cy="1273.7" r="4.6"/></g>
<g fill="#d8d8d8"><circle cx="2455.5" cy="1189.5" r="1.2"/><circle cx="2455.5" cy="1271.8" r="1.2"/></g>
<rect x="2442" y="1344" width="22" height="23" fill="none" stroke="#454545" stroke-width="1.6"/>
<rect x="2492.3" y="1158" width="44.3" height="64.4" fill="#2e2e2e"/>
<rect x="2494" y="1160.8" width="40.3" height="60.4" fill="url(#chk)"/>
<g clip-path="url(#tclip1)"><use href="#figimg" transform="translate(2494 1160.8) scale(0.0672 0.0662) translate(-854 -315)"/></g>
<rect x="2487.9" y="1236" width="53.1" height="73.3" fill="#ffffff"/>
<rect x="2491.4" y="1239.5" width="46.1" height="66.3" fill="#2e2e2e"/>
<g clip-path="url(#tclip2)"><use href="#photoimg" transform="translate(2494 1243) scale(0.0672 0.0658) translate(-854 -315)"/></g>
<rect x="2492.3" y="1322" width="44.3" height="64.7" fill="#2e2e2e"/>
<g clip-path="url(#tclip3)"><use href="#photoimg" transform="translate(2494 1324.5) scale(0.0672 0.0658) translate(-854 -315)"/></g>
<text x="2553.2" y="1199" font-size="21" fill="#e0e0e0" stroke="#e0e0e0" stroke-width="0.45" textLength="60.8" lengthAdjust="spacingAndGlyphs">图层 2</text>
<text x="2553.2" y="1281" font-size="21" fill="#e6e6e6" stroke="#e6e6e6" stroke-width="0.45" textLength="58.2" lengthAdjust="spacingAndGlyphs">图层 1</text>
<text x="2553.2" y="1363" font-size="21" fill="#e0e0e0" stroke="#e0e0e0" stroke-width="0.45" textLength="40.7" lengthAdjust="spacingAndGlyphs">背景</text>
<path d="M2912.5 1352 L2912.5 1349 A5.5 5.5 0 0 1 2923.5 1349 L2923.5 1352" stroke="#d4d4d4" stroke-width="2" fill="none"/>
<rect x="2909.8" y="1352" width="16.4" height="13.6" rx="1.5" fill="none" stroke="#d4d4d4" stroke-width="2"/>
<circle cx="2918" cy="1358.8" r="1.8" fill="#d4d4d4"/>
<!-- layers footer -->
<rect x="2424" y="1656" width="567" height="2" fill="#3a3a3a"/>
</svg>


<!-- bottom svg -->
<svg class="a" style="left:0;top:0" width="2994" height="1708" viewBox="0 0 2994 1708">
<defs>
<linearGradient id="dock" x1="0" y1="0" x2="1" y2="0"><stop offset="0" stop-color="#6a7a8e"/><stop offset="1" stop-color="#8596ae"/></linearGradient>
</defs>
<!-- status bar -->
<rect x="2" y="1366" width="2304" height="32" fill="#494949"/>
<rect x="122" y="1368" width="366" height="29.6" fill="#535353"/>
<text x="36.2" y="1391.3" font-size="22.8" fill="#f2f2f2" stroke="#f2f2f2" stroke-width="0.4" textLength="50" lengthAdjust="spacingAndGlyphs">50%</text>
<text x="125.3" y="1391.3" font-size="22.8" fill="#d8d8d8" stroke="#d8d8d8" stroke-width="0.45" textLength="331" lengthAdjust="spacingAndGlyphs">1200 像素 x 1826 像素 (300 ppi)</text>
<path d="M471 1375.5 L477.5 1384.5 L471 1393.5" stroke="#d8d8d8" stroke-width="1.8" fill="none"/>
<rect x="965" y="1372" width="866.5" height="20" rx="10" fill="#696969"/>
<!-- timeline header -->
<text x="20.6" y="1438.4" font-size="21.5" fill="#f0f0f0" stroke="#f0f0f0" stroke-width="0.4" textLength="64.6" lengthAdjust="spacingAndGlyphs">时间轴</text>
<g fill="#c4c4c4"><rect x="2308" y="1424" width="20" height="2"/><rect x="2308" y="1428" width="20" height="2"/><rect x="2308" y="1432" width="20" height="2"/><rect x="2308" y="1436" width="20" height="2"/></g>
<rect x="2" y="1458" width="2336" height="2" fill="#3a3a3a"/>
<!-- controls -->
<g fill="#9a9a9a">
<rect x="21.2" y="1491.6" width="3.4" height="13.4"/><path d="M27.4 1498.3 L42.1 1491.6 L42.1 1505 Z"/>
<path d="M81.3 1498.3 L96 1491.6 L96 1505 Z"/><rect x="98" y="1491.6" width="3.8" height="13.4"/>
<path d="M147.9 1488.3 L165.5 1497.6 L147.9 1506.9 Z"/>
<rect x="209.2" y="1491.6" width="3.8" height="13.4"/><path d="M229.5 1498.3 L215.4 1491.6 L215.4 1505 Z"/>
<path d="M270 1493.5 L275 1493.5 L282 1488.3 L282 1507.3 L275 1502.5 L270 1502.5 Z"/>
<path d="M354 1512 L361 1512 L357.5 1515.5 Z" opacity="0.7"/>
</g>
<g transform="translate(340.8 1498) scale(0.8)" fill="#9a9a9a"><circle r="9.4"/><rect x="-2.2" y="-13" width="4.4" height="6" rx="1" transform="rotate(0)"/><rect x="-2.2" y="-13" width="4.4" height="6" rx="1" transform="rotate(45)"/><rect x="-2.2" y="-13" width="4.4" height="6" rx="1" transform="rotate(90)"/><rect x="-2.2" y="-13" width="4.4" height="6" rx="1" transform="rotate(135)"/><rect x="-2.2" y="-13" width="4.4" height="6" rx="1" transform="rotate(180)"/><rect x="-2.2" y="-13" width="4.4" height="6" rx="1" transform="rotate(225)"/><rect x="-2.2" y="-13" width="4.4" height="6" rx="1" transform="rotate(270)"/><rect x="-2.2" y="-13" width="4.4" height="6" rx="1" transform="rotate(315)"/><circle r="4.7" fill="#535353"/></g>
<rect x="378" y="1466.7" width="2" height="62.7" fill="#393939"/>
<g stroke="#9a9a9a" stroke-width="2.4" fill="none"><circle cx="406" cy="1491" r="4.2"/><circle cx="406" cy="1505" r="4.2"/><path d="M409.5 1493 L432.5 1508 M409.5 1503 L432.5 1488"/></g>
<rect x="470" y="1487.3" width="22" height="21.5" fill="none" stroke="#9a9a9a" stroke-width="2.2"/>
<path d="M492 1487.3 L492 1508.8 L470 1508.8 Z" fill="#9a9a9a"/>
<rect x="530" y="1462" width="2" height="72" fill="#393939"/>
<rect x="2250" y="1462" width="2" height="72" fill="#393939"/>
<rect x="2" y="1533.3" width="2336" height="2.2" fill="#393939"/>
<!-- create video timeline button -->
<rect x="1049" y="1577.4" width="198" height="47" rx="5" fill="#434343" stroke="#5e5e5e" stroke-width="2"/>
<text x="1070" y="1608.8" font-size="22" fill="#f0f0f0" stroke="#f0f0f0" stroke-width="0.5" textLength="153.8" lengthAdjust="spacingAndGlyphs">创建视频时间轴</text>
<rect x="1252.5" y="1577.4" width="39.5" height="47" rx="5" fill="#434343" stroke="#5e5e5e" stroke-width="2"/>
<path d="M1259 1594.5 L1272 1607.5 L1285 1594.5" stroke="#e6e6e6" stroke-width="1.8" fill="none"/>
<!-- timeline footer -->
<rect x="2" y="1666.5" width="846" height="2" fill="#393939"/>
<rect x="590" y="1666.5" width="199" height="2" fill="#5e5e5e"/>
<rect x="2" y="1668.5" width="846" height="40" fill="#535353"/>
<rect x="848" y="1666" width="1458" height="42" fill="#474747"/>
<rect x="2306" y="1666" width="32" height="42" fill="#535353"/>
<g fill="none" stroke="#9a9a9a" stroke-width="1.8"><rect x="15" y="1682" width="8.5" height="9.5"/><rect x="27.5" y="1682" width="8.5" height="9.5"/><rect x="40" y="1682" width="8.5" height="9.5"/></g>
<path d="M76 1696 C77 1686 84 1680 94 1681 L94 1675.5 L102 1684.5 L94 1693 L94 1687.5 C86 1687 80 1690 76 1696 Z" fill="#9a9a9a"/>
<rect x="528" y="1671" width="2" height="30" fill="#3e3e3e"/>
<path d="M551.5 1693 L557 1687 L560 1690 L565 1684 L572 1693 Z" fill="#9a9a9a"/>
<rect x="612" y="1676" width="156" height="6" fill="#6e6e6e"/>
<path d="M802 1691.7 L813 1680 L818 1685 L824 1677.2 L836.3 1691.7 Z" fill="#9a9a9a"/>
<!-- layers footer icons -->
<g fill="none" stroke="#8e8e8e" stroke-width="2.6"><path d="M2596 1674.5 L2592 1674.5 A6.5 6.5 0 0 0 2592 1687.5 L2596 1687.5 M2604 1674.5 L2608 1674.5 A6.5 6.5 0 0 1 2608 1687.5 L2604 1687.5"/><path d="M2593 1681 L2607 1681"/></g>
<text x="2643" y="1690" font-size="27" font-style="italic" fill="#d4d4d4">fx</text>
<path d="M2666 1694 L2673 1694 L2669.5 1698 Z" fill="#d4d4d4"/>
<rect x="2697" y="1671.5" width="25" height="21" rx="1.5" fill="#d4d4d4"/>
<circle cx="2709.5" cy="1682" r="5.3" fill="#535353"/>
<circle cx="2763" cy="1682" r="9.2" fill="none" stroke="#d4d4d4" stroke-width="2.4"/>
<path d="M2769.5 1675.5 A9.2 9.2 0 0 1 2756.5 1688.5 Z" fill="#d4d4d4"/>
<path d="M2774 1694 L2781 1694 L2777.5 1698 Z" fill="#d4d4d4"/>
<path d="M2805 1673 L2813 1673 L2815 1675.5 L2829 1675.5 L2829 1691 L2805 1691 Z" fill="#d4d4d4"/>
<rect x="2860" y="1671" width="21.5" height="21.5" fill="none" stroke="#d4d4d4" stroke-width="2"/>
<g fill="#d4d4d4"><rect x="2865" y="1680.7" width="11.5" height="2.2"/><rect x="2869.6" y="1676" width="2.2" height="11.5"/></g>
<g fill="none" stroke="#d4d4d4" stroke-width="2"><path d="M2914 1674 L2936 1674 M2921 1674 L2921 1670.5 L2929 1670.5 L2929 1674 M2916.5 1674 L2918 1692.5 L2932 1692.5 L2933.5 1674 M2921.5 1677.5 L2921.5 1689.5 M2925 1677.5 L2925 1689.5 M2928.5 1677.5 L2928.5 1689.5"/></g>
<!-- dock-like bar -->
<path d="M169.8 1708 C178 1700 192 1696.5 212 1696.5 L2776 1696.5 C2800 1696.5 2815 1700 2825.3 1708 Z" fill="url(#dock)"/>
<path d="M169.8 1708 C178 1700 192 1696.5 212 1696.5 L2776 1696.5 C2800 1696.5 2815 1700 2825.3 1708" fill="none" stroke="#abbfd6" stroke-width="1.5"/>
</svg>

</body></html>
